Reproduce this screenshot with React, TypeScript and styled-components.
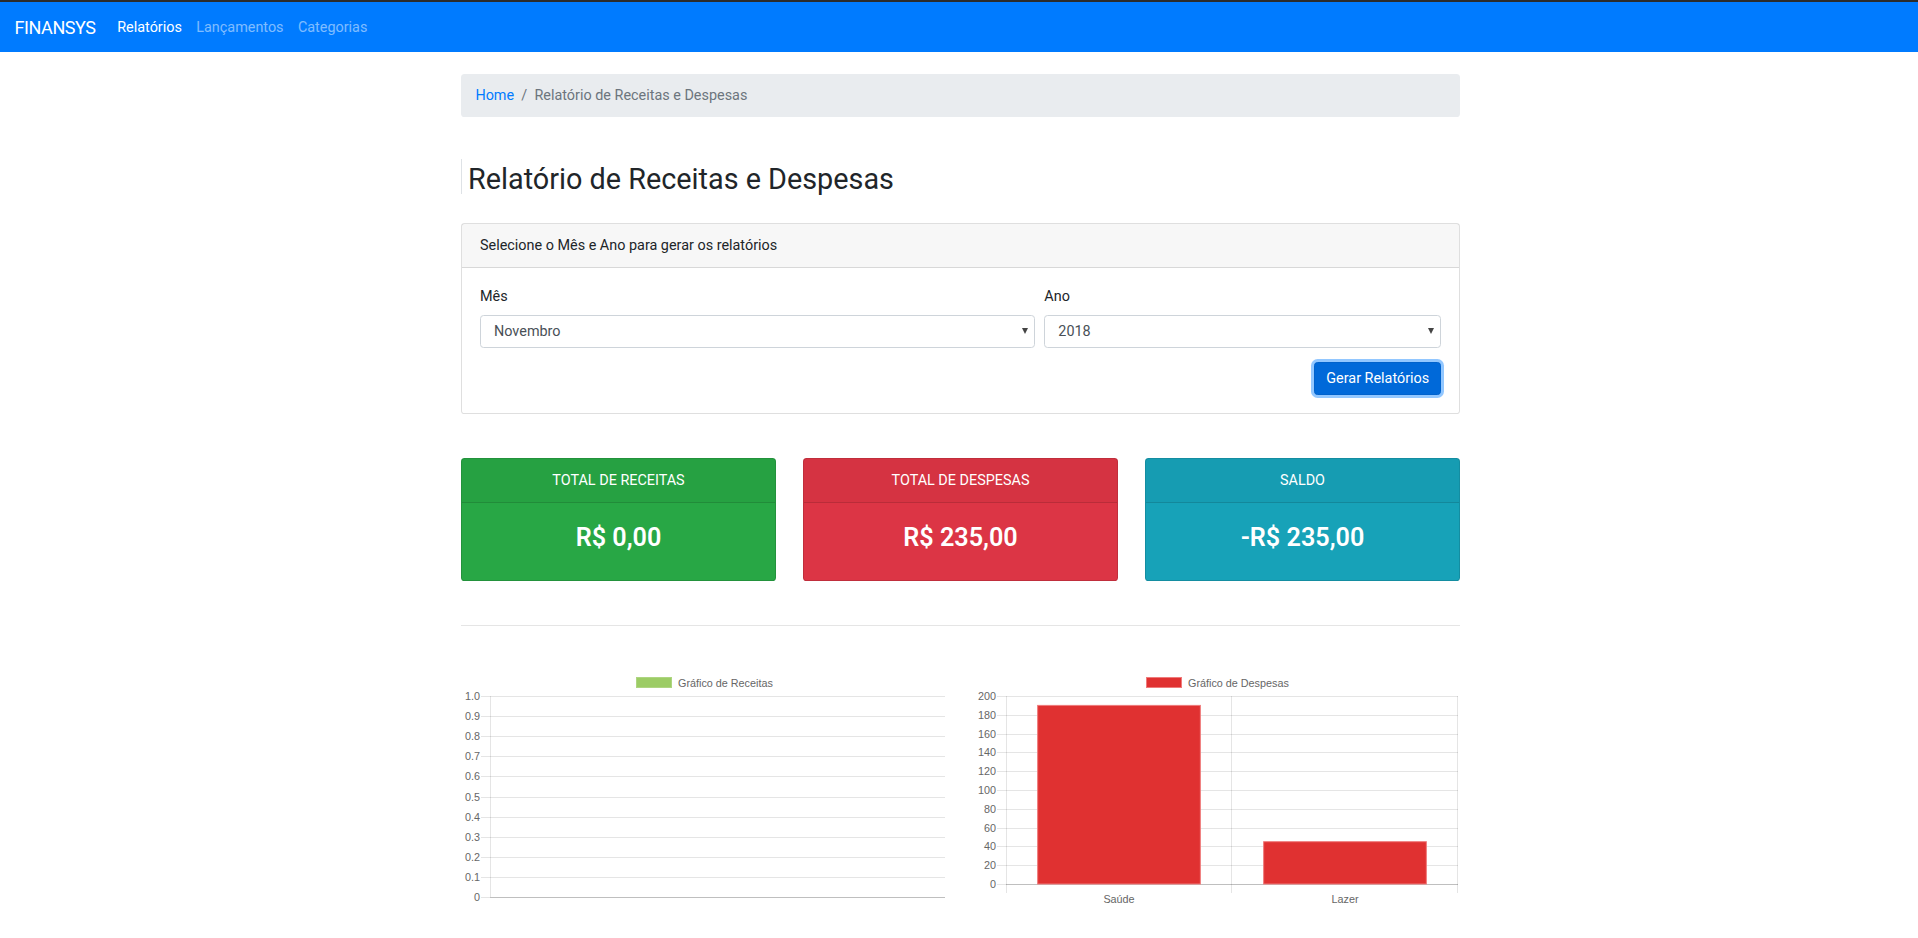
import React from "react";
import styled, { createGlobalStyle } from "styled-components";

const GlobalStyle = createGlobalStyle`
  * { box-sizing: border-box; }
  body {
    margin: 0;
    font-family: Roboto, "Open Sans", Arial, sans-serif;
    font-size: 14.4px;
    line-height: 1.5;
    color: #212529;
    background: #fff;
  }
`;

const Navbar = styled.nav`
  display: flex;
  align-items: center;
  background: #007bff;
  border-top: 2px solid #2b2b2b;
  padding: 7.2px 14.4px;
`;

const Brand = styled.a`
  font-size: 18px;
  line-height: 27px;
  padding: 4.5px 0;
  margin-right: 14.4px;
  letter-spacing: -0.4px;
  color: #fff;
  text-decoration: none;
`;

const NavList = styled.ul`
  display: flex;
  list-style: none;
  margin: 0;
  padding: 0;
`;

const NavLink = styled.a<{ $active?: boolean }>`
  display: block;
  padding: 8px 7.2px 6.4px;
  line-height: 21.6px;
  color: ${(p) => (p.$active ? "#fff" : "rgba(255,255,255,.5)")};
  text-decoration: none;
`;

const Container = styled.main`
  width: 999px;
  margin: 0 0 0 calc(50% - 498px);
  padding: 21.6px 0 40px;
`;

const Breadcrumb = styled.ol`
  display: flex;
  list-style: none;
  margin: 0;
  padding: 11.4px 14.4px 10.2px;
  line-height: 21.6px;
  background: #e9ecef;
  border-radius: 3.6px;
`;

const Crumb = styled.li`
  color: #6c757d;
  & + &::before {
    content: "/";
    display: inline-block;
    padding: 0 7.2px;
    color: #6c757d;
  }
`;

const CrumbLink = styled.a`
  color: #007bff;
  text-decoration: none;
`;

const Title = styled.h2`
  margin: 42px 0 29px;
  padding: 6px 0 0 6px;
  font-size: 28.8px;
  font-weight: 400;
  line-height: 28.5px;
  border-left: 1px solid #dee2e6;
`;

const Card = styled.section`
  border: 1px solid rgba(0, 0, 0, 0.125);
  border-radius: 3.6px;
  background: #fff;
`;

const CardHeader = styled.div`
  padding: 11.4px 18px 10.2px;
  line-height: 21.6px;
  background: rgba(0, 0, 0, 0.03);
  border-bottom: 1px solid rgba(0, 0, 0, 0.125);
`;

const CardBody = styled.div`
  padding: 18px;
`;

const FormRow = styled.div`
  display: grid;
  grid-template-columns: 7fr 5fr;
  gap: 9px;
`;

const Label = styled.label`
  display: block;
  margin-bottom: 7.2px;
  padding-top: 1px;
  line-height: 20.6px;
`;

const SelectWrap = styled.div`
  position: relative;
  &::after {
    content: "";
    position: absolute;
    right: 7px;
    top: 50%;
    margin-top: -3px;
    border-left: 3.5px solid transparent;
    border-right: 3.5px solid transparent;
    border-top: 6px solid #444;
    pointer-events: none;
  }
`;

const Select = styled.select`
  appearance: none;
  -webkit-appearance: none;
  display: block;
  width: 100%;
  height: 33px;
  padding: 1px 28px 0 13px;
  font: inherit;
  color: #495057;
  background: #fff;
  border: 1px solid #ced4da;
  border-radius: 3.6px;
  outline: none;
`;

const ButtonRow = styled.div`
  display: flex;
  justify-content: flex-end;
  margin-top: 14.4px;
`;

const Button = styled.button`
  font: inherit;
  line-height: 20px;
  padding: 6px 10.8px 4.8px;
  color: #fff;
  background: #0069d9;
  border: 1px solid #0062cc;
  border-radius: 3.6px;
  box-shadow: 0 0 0 3px rgba(38, 143, 255, 0.5);
  cursor: pointer;
`;

const SummaryGrid = styled.div`
  display: grid;
  grid-template-columns: repeat(3, 1fr);
  gap: 27px;
  margin-top: 44px;
`;

const SummaryCard = styled.div<{ $bg: string }>`
  background: ${(p) => p.$bg};
  color: #fff;
  border: 1px solid rgba(0, 0, 0, 0.125);
  border-radius: 3.6px;
`;

const SummaryHeader = styled.div`
  padding: 11.4px 18px 10.2px;
  line-height: 21.6px;
  text-align: center;
  background: rgba(0, 0, 0, 0.03);
  border-bottom: 1px solid rgba(0, 0, 0, 0.125);
`;

const SummaryBody = styled.div`
  padding: 18px;
  text-align: center;
`;

const SummaryValue = styled.h3`
  margin: 0 0 7.2px;
  font-size: 25.2px;
  font-weight: 600;
  line-height: 33.5px;
`;

const Rule = styled.hr`
  margin: 44px 0 0;
  border: 0;
  border-top: 1px solid rgba(0, 0, 0, 0.1);
`;

const ChartsGrid = styled.div`
  display: grid;
  grid-template-columns: 1fr 1fr;
  gap: 27px;
  margin-top: 39px;
`;

const ChartSvg = styled.svg`
  display: block;
  font-family: "Liberation Sans", Arial, sans-serif;
  font-size: 10.8px;
`;

type Bar = { label: string; value: number };

type ChartProps = {
  axisX: number;
  right: number;
  top: number;
  zero: number;
  ticks: number[];
  max: number;
  decimals: boolean;
  bars: Bar[];
  legend: { text: string; boxX: number; fill: string; stroke: string };
  barFill: string;
  barStroke: string;
};

const GRID = "rgba(0,0,0,0.1)";
const ZERO = "rgba(0,0,0,0.25)";

function BarChart(p: ChartProps) {
  const h = p.zero - p.top;
  const yOf = (v: number) => p.zero - (v / p.max) * h;
  const n = p.bars.length;
  const catW = n ? (p.right - p.axisX) / n : 0;
  return (
    <ChartSvg width={486} height={250} viewBox="0 0 486 250">
      <rect
        x={p.legend.boxX + 0.5}
        y={12.5}
        width={35}
        height={10}
        fill={p.legend.fill}
        stroke={p.legend.stroke}
      />
      <text x={p.legend.boxX + 42} y={21.5} fill="#666">
        {p.legend.text}
      </text>
      {p.ticks.map((t) => {
        const y = Math.round(yOf(t)) + 0.5;
        const isZero = t === 0;
        return (
          <g key={t}>
            <line x1={p.axisX - 9} x2={p.axisX} y1={y} y2={y} stroke={GRID} />
            <line
              x1={p.axisX}
              x2={p.right}
              y1={y}
              y2={y}
              stroke={isZero ? ZERO : GRID}
            />
            <text x={p.axisX - 10} y={y + 3.8} textAnchor="end" fill="#666">
              {p.decimals ? (t === 0 ? "0" : t.toFixed(1)) : String(t)}
            </text>
          </g>
        );
      })}
      <line
        x1={p.axisX + 0.5}
        x2={p.axisX + 0.5}
        y1={p.top}
        y2={n ? p.zero + 9 : p.zero}
        stroke={GRID}
      />
      {p.bars.map((b, i) => {
        const x0 = p.axisX + catW * i;
        const bw = catW * 0.72;
        const bx = x0 + (catW - bw) / 2;
        const by = yOf(b.value);
        return (
          <g key={b.label}>
            <line
              x1={x0 + catW - 0.5}
              x2={x0 + catW - 0.5}
              y1={p.top}
              y2={p.zero + 9}
              stroke={GRID}
            />
            <rect
              x={bx}
              y={by}
              width={bw}
              height={p.zero - by}
              fill={p.barFill}
              stroke={p.barStroke}
              strokeWidth={1}
            />
            <text x={x0 + catW / 2} y={p.zero + 19} textAnchor="middle" fill="#666">
              {b.label}
            </text>
          </g>
        );
      })}
    </ChartSvg>
  );
}

export default function App() {
  return (
    <>
      <GlobalStyle />
      <Navbar>
        <Brand href="#">FINANSYS</Brand>
        <NavList>
          <li>
            <NavLink href="#" $active>
              Relatórios
            </NavLink>
          </li>
          <li>
            <NavLink href="#">Lançamentos</NavLink>
          </li>
          <li>
            <NavLink href="#">Categorias</NavLink>
          </li>
        </NavList>
      </Navbar>
      <Container>
        <Breadcrumb>
          <Crumb>
            <CrumbLink href="#">Home</CrumbLink>
          </Crumb>
          <Crumb>Relatório de Receitas e Despesas</Crumb>
        </Breadcrumb>
        <Title>Relatório de Receitas e Despesas</Title>
        <Card>
          <CardHeader>Selecione o Mês e Ano para gerar os relatórios</CardHeader>
          <CardBody>
            <FormRow>
              <div>
                <Label>Mês</Label>
                <SelectWrap>
                  <Select defaultValue="11">
                    <option value="11">Novembro</option>
                  </Select>
                </SelectWrap>
              </div>
              <div>
                <Label>Ano</Label>
                <SelectWrap>
                  <Select defaultValue="2018">
                    <option value="2018">2018</option>
                  </Select>
                </SelectWrap>
              </div>
            </FormRow>
            <ButtonRow>
              <Button type="button">Gerar Relatórios</Button>
            </ButtonRow>
          </CardBody>
        </Card>
        <SummaryGrid>
          <SummaryCard $bg="#28a745">
            <SummaryHeader>TOTAL DE RECEITAS</SummaryHeader>
            <SummaryBody>
              <SummaryValue>R$ 0,00</SummaryValue>
            </SummaryBody>
          </SummaryCard>
          <SummaryCard $bg="#dc3545">
            <SummaryHeader>TOTAL DE DESPESAS</SummaryHeader>
            <SummaryBody>
              <SummaryValue>R$ 235,00</SummaryValue>
            </SummaryBody>
          </SummaryCard>
          <SummaryCard $bg="#17a2b8">
            <SummaryHeader>SALDO</SummaryHeader>
            <SummaryBody>
              <SummaryValue>-R$ 235,00</SummaryValue>
            </SummaryBody>
          </SummaryCard>
        </SummaryGrid>
        <Rule />
        <ChartsGrid>
          <BarChart
            axisX={29}
            right={484}
            top={31}
            zero={232}
            ticks={[1, 0.9, 0.8, 0.7, 0.6, 0.5, 0.4, 0.3, 0.2, 0.1, 0]}
            max={1}
            decimals
            bars={[]}
            legend={{ text: "Gráfico de Receitas", boxX: 175, fill: "#9ccc65", stroke: "#aed581" }}
            barFill="#9ccc65"
            barStroke="#aed581"
          />
          <BarChart
            axisX={32}
            right={484}
            top={31}
            zero={219}
            ticks={[200, 180, 160, 140, 120, 100, 80, 60, 40, 20, 0]}
            max={200}
            decimals={false}
            bars={[
              { label: "Saúde", value: 190 },
              { label: "Lazer", value: 45 },
            ]}
            legend={{ text: "Gráfico de Despesas", boxX: 172, fill: "#e03131", stroke: "#ef7b7b" }}
            barFill="#e03131"
            barStroke="#ef7b7b"
          />
        </ChartsGrid>
      </Container>
    </>
  );
}
